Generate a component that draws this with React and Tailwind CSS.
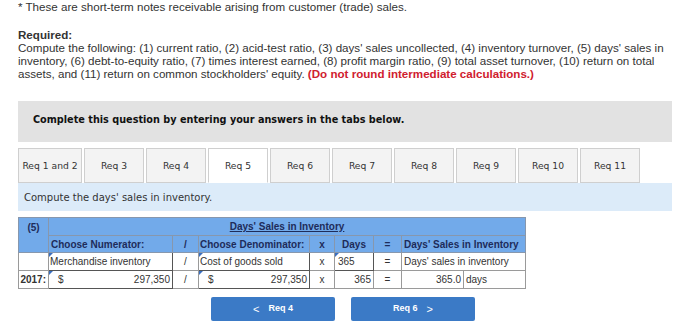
const tabs = ["Req 1 and 2", "Req 3", "Req 4", "Req 5", "Req 6", "Req 7", "Req 8", "Req 9", "Req 10", "Req 11"];

function Mark() {
  return (
    <span className="absolute left-0 top-0 h-0 w-0 border-l-[4px] border-b-[4px] border-l-[#3a6fc0] border-b-transparent" />
  );
}

export default function App() {
  const verdana = { fontFamily: '"DejaVu Sans", Verdana, sans-serif' };
  return (
    <div className="h-[331px] w-[700px] overflow-hidden bg-white text-[#333]" style={{ fontFamily: '"Liberation Sans", Arial, sans-serif' }}>
      <div className="ml-[18px] w-[654px]">
        <p className="whitespace-nowrap text-[11.6px] leading-[13px]">* These are short-term notes receivable arising from customer (trade) sales.</p>
        <p className="mt-[15px] text-[11.6px] font-bold leading-[13px]">Required:</p>
        <p className="whitespace-nowrap text-[11.6px] leading-[13px]">
          Compute the following: (1) current ratio, (2) acid-test ratio, (3) days' sales uncollected, (4) inventory turnover, (5) days' sales in
          <br />
          inventory, (6) debt-to-equity ratio, (7) times interest earned, (8) profit margin ratio, (9) total asset turnover, (10) return on total
          <br />
          assets, and (11) return on common stockholders' equity.{" "}
          <span className="font-bold text-[#d0202e]">(Do not round intermediate calculations.)</span>
        </p>

        <div className="mt-[21px] h-[41px] bg-[#e2e2e2] px-[15px] pt-[12px]" style={verdana}>
          <p className="text-[9.7px] font-bold text-[#111]">Complete this question by entering your answers in the tabs below.</p>
        </div>

        <div className="mt-[6px] flex gap-[2px]" style={verdana}>
          {tabs.map((t, i) => (
            <div
              key={t}
              className={`flex h-[35px] items-center justify-center border border-[#cfcfcf] text-[9.2px] text-[#333] ${i === 0 ? "w-[64px]" : "w-[60px]"} ${t === "Req 5" ? "border-b-white bg-white" : "bg-[#f3f3f3]"}`}
            >
              {t}
            </div>
          ))}
        </div>

        <div className="flex h-[28px] items-center bg-[#dcebf9] px-[6px] text-[10px] text-[#333]" style={verdana}>
          Compute the days' sales in inventory.
        </div>

        <table className="mt-[6px] w-[508px] table-fixed border-collapse text-[10px]">
          <colgroup>
            <col className="w-[30px]" />
            <col className="w-[124px]" />
            <col className="w-[26px]" />
            <col className="w-[111px]" />
            <col className="w-[25px]" />
            <col className="w-[39px]" />
            <col className="w-[28px]" />
            <col className="w-[62px]" />
            <col className="w-[62px]" />
          </colgroup>
          <tbody>
            <tr className="h-[18px] bg-[#72aaea] font-bold text-[#1e2c5a]">
              <td rowSpan={2} className="border border-[#8797ad] pt-[2px] text-center align-top">(5)</td>
              <td colSpan={8} className="border border-[#8797ad] text-center underline">Days' Sales in Inventory</td>
            </tr>
            <tr className="h-[17px] bg-[#72aaea] font-bold text-[#1e2c5a]">
              <td className="border border-[#8797ad] px-[2px]">Choose Numerator:</td>
              <td className="border border-[#8797ad] text-center">/</td>
              <td className="border border-[#8797ad] px-[1px]">Choose Denominator:</td>
              <td className="border border-[#8797ad] text-center">x</td>
              <td className="border border-[#8797ad] text-center">Days</td>
              <td className="border border-[#8797ad] text-center">=</td>
              <td colSpan={2} className="border border-[#8797ad] px-[2px]">Days' Sales in Inventory</td>
            </tr>
            <tr className="h-[18px]">
              <td className="border border-[#9a9a9a]" />
              <td className="relative border border-[#555] px-[1px]"><Mark />Merchandise inventory</td>
              <td className="border border-[#9a9a9a] text-center">/</td>
              <td className="relative border border-[#555] px-[1px]"><Mark />Cost of goods sold</td>
              <td className="border border-[#9a9a9a] text-center">x</td>
              <td className="relative border border-[#555] px-[3px]"><Mark />365</td>
              <td className="border border-[#9a9a9a] text-center">=</td>
              <td colSpan={2} className="border border-[#9a9a9a] px-[2px]">Days' sales in inventory</td>
            </tr>
            <tr className="h-[18px]">
              <td className="border border-[#9a9a9a] pr-[2px] text-right font-bold">2017:</td>
              <td className="relative border border-[#555] px-[2px]">
                <Mark />
                <div className="flex justify-between pl-[7px]"><span>$</span><span>297,350</span></div>
              </td>
              <td className="border border-[#9a9a9a] text-center">/</td>
              <td className="relative border border-[#555] px-[2px]">
                <Mark />
                <div className="flex justify-between pl-[7px]"><span>$</span><span>297,350</span></div>
              </td>
              <td className="border border-[#9a9a9a] text-center">x</td>
              <td className="border border-[#9a9a9a] px-[2px] text-right">365</td>
              <td className="border border-[#9a9a9a] text-center">=</td>
              <td className="border border-[#9a9a9a] px-[2px] text-right">365.0</td>
              <td className="border border-[#9a9a9a] px-[2px]">days</td>
            </tr>
          </tbody>
        </table>

        <div className="mt-[8px] flex justify-center gap-[16px] pr-[4px]">
          <button className="flex h-[24px] w-[124px] items-center justify-center gap-[9px] rounded-[2px] bg-[#3b7ac6] text-[9px] font-bold text-white">
            <span className="text-[11px] font-normal">&lt;</span>
            <span>Req 4</span>
          </button>
          <button className="flex h-[24px] w-[124px] items-center justify-center gap-[9px] rounded-[2px] bg-[#3b7ac6] text-[9px] font-bold text-white">
            <span>Req 6</span>
            <span className="text-[11px] font-normal">&gt;</span>
          </button>
        </div>
      </div>
    </div>
  );
}
